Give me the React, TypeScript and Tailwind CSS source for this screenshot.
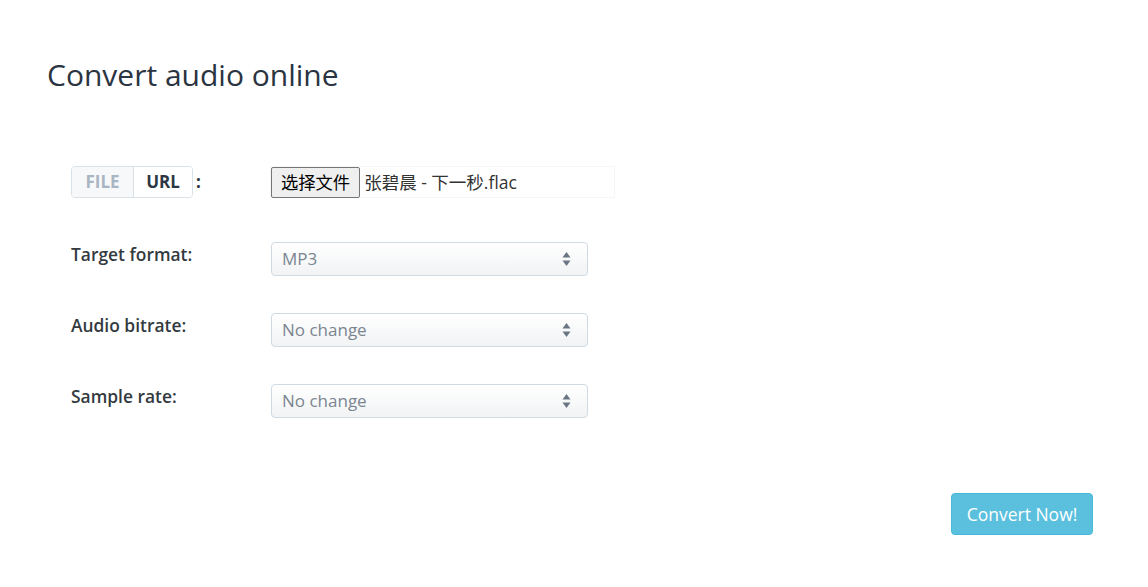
import React from "react";

const font = { fontFamily: '"Open Sans", "Noto Sans CJK SC", sans-serif' };

function Arrows() {
  return (
    <svg width="9" height="16" viewBox="0 0 9 16" className="shrink-0">
      <path d="M4.5 1 L8.5 6.5 L0.5 6.5 Z" fill="#6b7684" />
      <path d="M4.5 15 L8.5 9.5 L0.5 9.5 Z" fill="#6b7684" />
    </svg>
  );
}

function Select({ value }: { value: string }) {
  return (
    <div className="flex h-[34px] w-[317px] items-center justify-between rounded-[4px] border border-[#cfdbe4] bg-gradient-to-b from-white to-[#f1f3f4] pl-[10px] pr-[16px] text-[17px] text-[#7b8591]">
      <span>{value}</span>
      <Arrows />
    </div>
  );
}

function Row({ label, children }: { label: string; children: React.ReactNode }) {
  return (
    <div className="flex items-start">
      <div className="w-[200px] text-[17.4px] font-semibold leading-[24px] text-[#333a40]">{label}</div>
      {children}
    </div>
  );
}

export default function App() {
  return (
    <div className="h-[587px] w-[1148px] bg-white" style={font}>
      <div className="px-[47px] pt-[54px]">
        <h1 className="text-[30px] font-normal leading-[42px] text-[#2b3441]">Convert audio online</h1>
      </div>
      <div className="flex flex-col gap-[37px] pl-[71px] pt-[70px]">
        <div className="mb-[7px] flex items-start">
          <div className="flex w-[199px] items-center">
            <div className="flex h-[32px] items-stretch overflow-hidden rounded-[4px] border border-[#d9e2e8] text-[17px] font-bold">
              <div className="flex w-[61px] items-center justify-center bg-[#f6f8f9] text-[#a9b5c2]">FILE</div>
              <div className="flex w-[59px] items-center justify-center border-l border-[#d9e2e8] bg-white text-[#2d3744]">URL</div>
            </div>
            <span className="ml-[3px] text-[17px] font-bold text-[#2d3744]">:</span>
          </div>
          <div className="flex h-[32px] w-[345px] items-center border border-[#f6f6f6]">
            <div
              className="flex h-[31px] items-center rounded-[2px] border border-[#767676] bg-[#efefef] px-[9px] text-[17.3px] text-black"
              style={{ fontFamily: '"Noto Sans CJK SC", sans-serif' }}
            >
              选择文件
            </div>
            <span className="ml-[4px] text-[17.5px] text-[#333]">张碧晨 - 下一秒.flac</span>
          </div>
        </div>
        <Row label="Target format:">
          <Select value="MP3" />
        </Row>
        <Row label="Audio bitrate:">
          <Select value="No change" />
        </Row>
        <Row label="Sample rate:">
          <Select value="No change" />
        </Row>
      </div>
      <div className="flex justify-end pr-[55px] pt-[75px]">
        <button className="h-[42px] w-[142px] rounded-[4px] border border-[#46b8da] bg-[#5bc0de] text-[17.5px] text-white">
          Convert Now!
        </button>
      </div>
    </div>
  );
}
